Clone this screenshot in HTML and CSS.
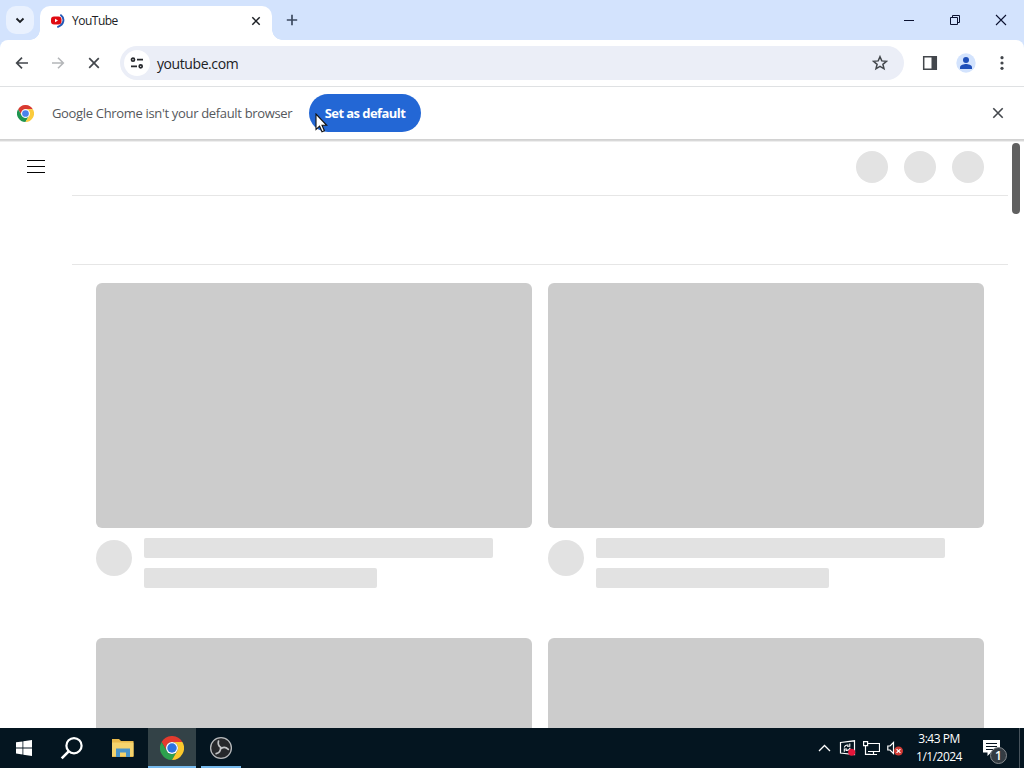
FILE: index.html
```html
<!DOCTYPE html>
<html lang="en">
<head>
  <meta charset="UTF-8" />
  <title>YouTube</title>
  <link rel="stylesheet" href="styles.css">
</head>
<body>
<!-- tab strip -->
<div class="tabstrip">
  <button class="tab-search"><svg width="10" height="10" viewBox="0 0 10 10"><path d="M1.500 3.500L5 7l3.500-3.500" fill="none" stroke="#1c1f24" stroke-width="1.800"/></svg></button>
  <div class="tab">
    <svg class="favicon" width="14" height="14" viewBox="0 0 14 14"><rect x="0" y="2.500" width="10.500" height="8" rx="3" fill="#e00b12"/><path d="M4 4.800l3 1.700-3 1.700z" fill="#fff"/><path d="M10 1.200Q13 3.500 12.300 7.200T7 12.800" fill="none" stroke="#2457b5" stroke-width="1.900" stroke-linecap="round"/></svg>
    <span class="tab-title">YouTube</span>
    <svg width="10" height="10" viewBox="0 0 10 10"><path d="M1.300 1.300l7.400 7.400M8.700 1.300L1.300 8.700" stroke="#1c1f24" stroke-width="1.500"/></svg>
  </div>
  <svg class="new-tab" width="12" height="12" viewBox="0 0 12 12"><path d="M6 .8v10.400M.8 6h10.400" stroke="#3c4a60" stroke-width="1.700"/></svg>
  <div class="window-buttons">
    <svg width="12" height="12" viewBox="0 0 12 12"><path d="M1 6.500h10" stroke="#0b1230"/></svg>
    <svg width="12" height="12" viewBox="0 0 12 12"><path d="M1.500 3.500h7v7h-7zM3.500 3.500v-2h7v7h-2" fill="none" stroke="#0b1230"/></svg>
    <svg width="12" height="12" viewBox="0 0 12 12"><path d="M1 1l10 10M11 1L1 11" stroke="#0b1230" stroke-width="1.100"/></svg>
  </div>
</div>

<!-- toolbar -->
<div class="toolbar">
  <svg class="nav" width="14" height="14" viewBox="0 0 14 14"><path d="M13 7H2M7 1.700L1.700 7 7 12.300" fill="none" stroke="#43474c" stroke-width="1.700"/></svg>
  <svg class="nav" width="14" height="14" viewBox="0 0 14 14"><path d="M1 7h11M7 1.700L12.300 7 7 12.300" fill="none" stroke="#b4b6b9" stroke-width="1.600"/></svg>
  <svg class="nav" width="14" height="14" viewBox="0 0 14 14"><path d="M2.200 2.200l9.600 9.600M11.800 2.200l-9.600 9.600" stroke="#43474c" stroke-width="1.700"/></svg>
  <div class="omnibox">
    <span class="site-info"><svg width="14" height="12" viewBox="0 0 14 12"><g fill="none" stroke="#26282c" stroke-width="1.700"><circle cx="3" cy="2.700" r="1.500"/><path d="M7 2.700h6M1 9.300h6"/><circle cx="10.700" cy="9.300" r="1.500"/></g></svg></span>
    <span class="url">youtube.com</span>
    <svg width="16" height="16" viewBox="0 0 16 16"><path d="M8 1.700l1.800 4.200 4.700.4-3.600 3 1.100 4.500L8 11.400l-4 2.400 1.100-4.500-3.600-3 4.700-.4z" fill="none" stroke="#43474c" stroke-width="1.500"/></svg>
  </div>
  <svg class="side-panel" width="16" height="16" viewBox="0 0 16 16"><path d="M1.700 1.700h12.600v12.600H1.700z" fill="none" stroke="#43474c" stroke-width="1.500"/><path d="M9.500 1.500h5v13h-5z" fill="#43474c"/></svg>
  <svg class="profile" width="20" height="20" viewBox="0 0 20 20"><circle cx="10" cy="10" r="9.700" fill="#d3e3fd"/><circle cx="10" cy="7" r="3" fill="#1f4fb9"/><path d="M4 16v-1.800c0-2.200 4-3.200 6-3.200s6 1 6 3.200V16z" fill="#1f4fb9"/></svg>
  <svg width="4" height="16" viewBox="0 0 4 16" fill="#43474c"><circle cx="2" cy="2.700" r="1.600"/><circle cx="2" cy="8" r="1.600"/><circle cx="2" cy="13.300" r="1.600"/></svg>
</div>

<!-- default browser bar -->
<div class="infobar">
  <svg width="17" height="17" viewBox="0 0 48 48"><path d="M24 12h20.800A24 24 0 0 0 3.200 12L13.600 30A12 12 0 0 1 24 12z" fill="#d93a30"/><path d="M34.400 30L24 48A24 24 0 0 1 3.200 12L13.600 30a12 12 0 0 0 20.800 0z" fill="#1f9550"/><path d="M24 12h20.800A24 24 0 0 1 24 48l10.400-18A12 12 0 0 0 24 12z" fill="#fbcb3c"/><circle cx="24" cy="24" r="12" fill="#fff"/><circle cx="24" cy="24" r="9.500" fill="#4a82ea"/></svg>
  <span class="infobar-text">Google Chrome isn't your default browser</span>
  <button class="set-default"><span>Set as default</span>
    <svg class="cursor" width="13" height="20" viewBox="0 0 13 20"><path d="M1 1v15.500l3.600-3.300L7 18.700l2.400-1-2.400-5.400h4.700z" fill="#fff" stroke="#111" stroke-width="1.100"/></svg>
  </button>
  <svg class="infobar-close" width="12" height="12" viewBox="0 0 12 12"><path d="M1.300 1.300l9.400 9.400M10.700 1.300l-9.400 9.400" stroke="#43474c" stroke-width="1.600"/></svg>
</div>

<!-- page -->
<main class="page">
  <div class="masthead">
    <svg class="menu" width="18" height="14" viewBox="0 0 18 14"><path d="M0 .5h18M0 6.500h18M0 12.500h18" stroke="#030303"/></svg>
    <span class="dot"></span><span class="dot"></span><span class="dot"></span>
  </div>
  <div class="chips"></div>
  <div class="grid">
    <div class="video">
      <div class="thumb"></div>
      <div class="details"><span class="avatar"></span><div class="lines"><div class="line"></div><div class="line short"></div></div></div>
    </div>
    <div class="video">
      <div class="thumb"></div>
      <div class="details"><span class="avatar"></span><div class="lines"><div class="line"></div><div class="line short"></div></div></div>
    </div>
    <div class="video"><div class="thumb"></div></div>
    <div class="video"><div class="thumb"></div></div>
  </div>
  <div class="scrollbar"></div>
</main>

<!-- taskbar -->
<div class="taskbar">
  <div class="task"><svg width="16" height="16" viewBox="0 0 16 16" fill="#fff"><path d="M0 2.300l6.500-.9v6.100H0zM7.300 1.300L16 0v7.500H7.300zM0 8.400h6.500v6.100L0 13.600zM7.300 8.400H16V16l-8.700-1.300z"/></svg></div>
  <div class="task"><svg width="24" height="24" viewBox="0 0 24 24"><circle cx="14" cy="9.700" r="7.600" fill="none" stroke="#fff" stroke-width="2.200"/><path d="M8.700 15.300L1.700 22.300" stroke="#fff" stroke-width="2.600"/></svg></div>
  <div class="task files"><svg width="22" height="20" viewBox="0 0 22 20"><path d="M0 1h7l2 2h12.500v16H0z" fill="#e9b94b"/><path d="M0 4.500h21.500V18H0z" fill="#f5d36d"/><path d="M4 19v-8.500h14V19h-4v-4.500H8V19z" fill="#4a94ca"/></svg></div>
  <div class="task active"><svg width="24" height="24" viewBox="0 0 48 48"><path d="M24 12h20.800A24 24 0 0 0 3.200 12L13.600 30A12 12 0 0 1 24 12z" fill="#e33b2e"/><path d="M34.400 30L24 48A24 24 0 0 1 3.200 12L13.600 30a12 12 0 0 0 20.800 0z" fill="#2da14e"/><path d="M24 12h20.800A24 24 0 0 1 24 48l10.400-18A12 12 0 0 0 24 12z" fill="#fbc82c"/><circle cx="24" cy="24" r="12" fill="#fff"/><circle cx="24" cy="24" r="9.500" fill="#2b73e0"/></svg></div>
  <div class="task running"><svg width="24" height="24" viewBox="0 0 24 24"><circle cx="12" cy="12" r="10.400" fill="#26282b" stroke="#b7b9bb" stroke-width="1.300"/><g fill="none" stroke="#c3c5c7" stroke-width="1.700" stroke-linecap="round"><path d="M12 11.500Q8.300 9.500 9.500 5"/><path d="M12 11.500Q8.300 9.500 9.500 5" transform="rotate(120 12 12)"/><path d="M12 11.500Q8.300 9.500 9.500 5" transform="rotate(240 12 12)"/></g></svg></div>
  <div class="tray">
    <svg width="13" height="8" viewBox="0 0 13 8"><path d="M1 7l5.500-5.500L12 7" fill="none" stroke="#fff" stroke-width="1.300"/></svg>
    <svg width="17" height="16" viewBox="0 0 17 16"><path d="M1.500 2.500L15.500.8v13.700l-14-1.500z" fill="none" stroke="#fff" stroke-width="1.200"/><path d="M5.300 7.500Q6 4.500 9.500 5M10.800 3.500v2.700H8M11.200 7.800Q10 11 6.500 10.200M5.300 11.700V9H8" fill="none" stroke="#fff" stroke-width="1.100"/><circle cx="12.700" cy="12.300" r="3.500" fill="#e3173b"/></svg>
    <svg width="17" height="15" viewBox="0 0 17 15"><path d="M5 2.500h11.500v8H5M.6.6h4v4h-4zM2.500 4.600v8.800h5M10.500 10.500v3M7 13.500h7" fill="none" stroke="#fff" stroke-width="1.200"/></svg>
    <svg width="17" height="15" viewBox="0 0 17 15"><path d="M.8 5H3l3.500-3.500v11L3 9H.8z" fill="none" stroke="#fff" stroke-width="1.200"/><circle cx="11.500" cy="10" r="4.500" fill="#d13b35"/><path d="M9.600 8.100l3.800 3.800M13.400 8.100l-3.800 3.800" stroke="#fff" stroke-width="1.200"/></svg>
  </div>
  <div class="clock"><span>3:43 PM</span><span>1/1/2024</span></div>
  <div class="notices">
    <svg width="17" height="16" viewBox="0 0 17 16"><path d="M0 0h17v12.500H8L4.500 16v-3.500H0z" fill="#fff"/><path d="M3 3.500h11M3 6.500h11M3 9.500h7" stroke="#06131f" stroke-width="1.100"/></svg>
    <span class="badge">1</span>
  </div>
  <div class="show-desktop"></div>
</div>
</body>
</html>
```
FILE: styles.css
```css
* { margin: 0; padding: 0; box-sizing: border-box; }
body {
  width: 1024px; height: 768px; overflow: hidden;
  display: flex; flex-direction: column;
  font-family: "Open Sans", "Noto Sans", sans-serif;
  font-size: 12px; background: #fff; color: #202124;
}
svg { display: block; flex-shrink: 0; }
button { border: none; font: inherit; }
span { white-space: nowrap; }

/* tabs */
.tabstrip {
  height: 48px; margin-bottom: -8px; flex-shrink: 0; background: #d3e3fd;
  display: flex; padding-left: 6px;
}
.tab-search {
  width: 28px; height: 28px; margin-top: 6px; border-radius: 10px;
  background: #e9f1fe; display: flex; align-items: center; justify-content: center;
}
.tab {
  position: relative; width: 232px; height: 34px; margin: 6px 0 0 6px;
  background: #fff; border-radius: 10px 10px 0 0;
  display: flex; align-items: center; padding: 0 11px 5px;
}
.tab::before, .tab::after {
  content: ""; position: absolute; bottom: 0; width: 10px; height: 10px;
}
.tab::before { left: -10px; background: radial-gradient(circle at 0 0, transparent 9.5px, #fff 10px); }
.tab::after { right: -10px; background: radial-gradient(circle at 100% 0, transparent 9.5px, #fff 10px); }
.favicon { margin-right: 7px; }
.tab-title { flex: 1; letter-spacing: -0.5px; }
.new-tab { margin: 14px 0 0 14px; }
.window-buttons { margin: 14px 17px 0 auto; display: flex; gap: 34px; }

/* toolbar */
.toolbar {
  position: relative; height: 47px; flex-shrink: 0; background: #fff;
  border-bottom: 1px solid #dfe1e3; border-radius: 8px 8px 0 0;
  display: flex; align-items: center; padding: 0 20px 0 15px;
}
.nav { margin-right: 22px; }
.omnibox {
  width: 784px; height: 34px; margin-left: -3px; border-radius: 17px;
  background: #ebeef7; display: flex; align-items: center; padding: 0 16px 0 4px;
}
.site-info {
  width: 26px; height: 26px; border-radius: 50%; background: #fff;
  display: flex; align-items: center; justify-content: center;
}
.url { flex: 1; margin-left: 7px; font-size: 14px; letter-spacing: -0.42px; }
.side-panel { margin-left: 18px; }
.profile { margin: 0 24px 0 18px; }

/* infobar */
.infobar {
  height: 52px; margin-bottom: 3px; flex-shrink: 0;
  box-shadow: 0 1px #d2d2d2, 0 2px #d8d8d8, 0 3px #eee;
  display: flex; align-items: center; padding: 0 20px 0 17px;
}
.infobar-text { width: 241px; margin-left: 18px; font-size: 13px; color: #55585c; letter-spacing: -0.33px; }
.set-default {
  position: relative; width: 112px; height: 38px; margin-left: 16px;
  border-radius: 19px; background: #2367d5; color: #fff;
  font-size: 13px; font-weight: 700; letter-spacing: -0.56px;
}
.cursor { position: absolute; left: 6px; top: 19px; }
.infobar-close { margin-left: auto; }

/* page */
.page { position: relative; flex: 1; overflow: hidden; }
.masthead { height: 54px; display: flex; align-items: center; padding: 0 40px 4px 27px; gap: 16px; }
.menu { margin-right: auto; }
.dot { width: 32px; height: 32px; border-radius: 50%; background: #e3e3e3; }
.chips {
  height: 70px; margin: -1px 16px 0 72px;
  border-top: 1px solid #e6e6e6; border-bottom: 1px solid #e6e6e6;
}
.grid {
  display: grid; grid-template-columns: 436px 436px; gap: 50px 16px;
  padding: 18px 0 0 96px;
}
.thumb { height: 245px; border-radius: 6px; background: #ccc; }
.details { display: flex; gap: 12px; margin-top: 10px; height: 50px; }
.avatar { width: 36px; height: 36px; margin-top: 2px; border-radius: 50%; background: #e2e2e2; }
.lines { flex: 1; display: flex; flex-direction: column; gap: 10px; }
.line { width: 349px; height: 20px; border-radius: 2px; background: #e2e2e2; }
.line.short { width: 233px; }
.scrollbar {
  position: absolute; right: 4px; top: 1px; width: 8px; height: 71px;
  border-radius: 4px; background: #606060;
}

/* taskbar */
.taskbar { height: 40px; flex-shrink: 0; background: #041520; color: #fff; display: flex; }
.task { width: 48px; margin-right: 1px; display: flex; align-items: center; justify-content: center; }
.task:nth-child(1) { margin-right: 0; }
.files { padding-left: 4px; }
.active { background: #334247; border-bottom: 2px solid #76b9ed; padding-top: 2px; margin-left: 2px; }
.running { width: 40px; margin-left: 4px; border-bottom: 2px solid #76b9ed; padding-top: 2px; }
.tray { margin-left: auto; display: flex; align-items: center; gap: 7px; }
.tray svg:nth-child(2) { margin-left: 1px; }
.clock {
  width: 62px; margin-left: 4px; display: flex; flex-direction: column; align-items: center;
  padding-top: 2px; line-height: 18px; letter-spacing: -0.5px;
}
.notices { position: relative; width: 49px; padding: 12px 0 0 13px; }
.badge {
  position: absolute; left: 20px; top: 19px; width: 17px; height: 17px;
  border: 1px solid #858a8e; border-radius: 50%; background: #343c43;
  font-size: 12px; font-weight: 600; line-height: 15px; text-align: center;
}
.show-desktop { width: 5px; border-left: 1px solid #47535c; }
```
